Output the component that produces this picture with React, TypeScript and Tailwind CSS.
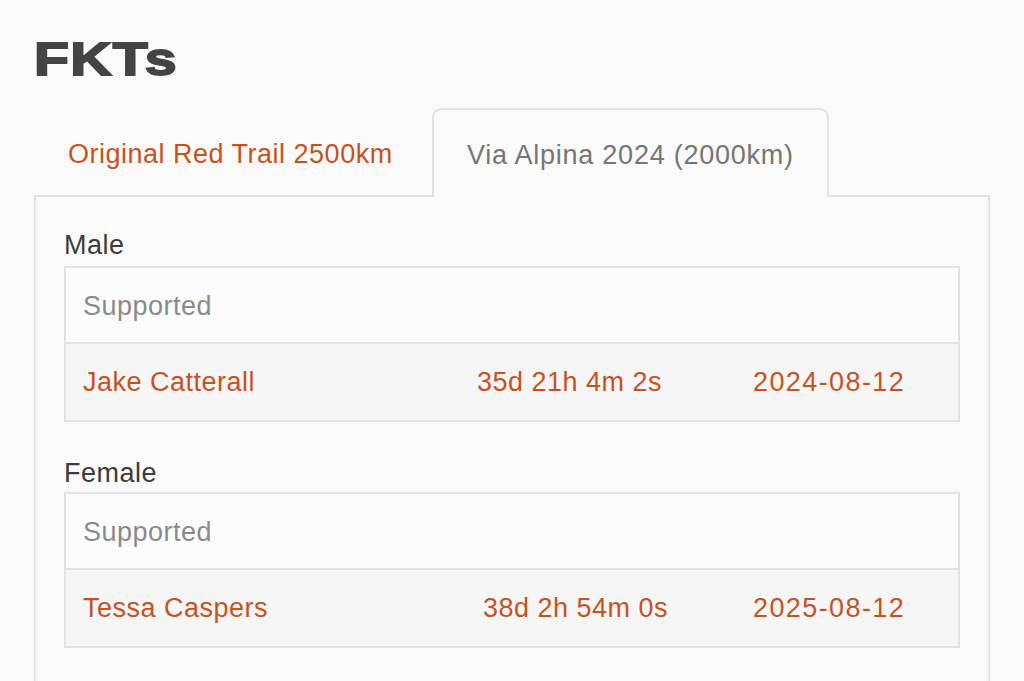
import React from "react";

const ORANGE = "text-[#c8521f]";

function RecordTable({
  name,
  time,
  date,
  cols,
}: {
  name: string;
  time: string;
  date: string;
  cols: string;
}) {
  return (
    <div className="border-2 border-[#e2e2e2]">
      <div className="h-[74px] flex items-center pl-[17px] pt-[2px] text-[#8a8a8a] bg-[#fcfcfc]">
        Supported
      </div>
      <div
        className={`h-[78px] border-t-2 border-[#e2e2e2] bg-[#f6f6f6] grid items-center pl-[17px] pt-[1px] ${cols} ${ORANGE}`}
      >
        <span>{name}</span>
        <span>{time}</span>
        <span className="tracking-[1.4px]">{date}</span>
      </div>
    </div>
  );
}

export default function App() {
  return (
    <div
      className="h-[681px] overflow-hidden bg-[#fafafa] pl-[34px] pr-[34px] text-[27px] tracking-[0.5px]"
      style={{ fontFamily: '"Liberation Sans", Arial, sans-serif' }}
    >
      <div className="pt-[35px] h-[108px]">
        <h1 className="inline-block origin-left scale-x-[1.22] text-[47px] leading-[47px] font-bold tracking-[1px] text-[#444444] [-webkit-text-stroke:1.8px_#444444]">
          FKTs
        </h1>
      </div>
      <div className="flex items-end">
        <div className={`h-[87px] w-[398px] flex items-center pl-[34px] pt-[5px] ${ORANGE}`}>
          Original Red Trail 2500km
        </div>
        <div className="relative z-10 -mb-[2px] h-[89px] flex items-center px-[33px] pt-[3px] tracking-[0.75px] border-2 border-b-0 border-[#e2e2e2] rounded-t-[9px] bg-[#fafafa] text-[#767676]">
          Via Alpina 2024 (2000km)
        </div>
      </div>
      <div className="border-2 border-[#e2e2e2] px-[28px] pt-[32px] pb-[200px]">
        <div className="h-[32px] leading-[32px] mb-[5px] text-[#3c3c3c]">Male</div>
        <RecordTable
          name="Jake Catterall"
          time="35d 21h 4m 2s"
          date="2024-08-12"
          cols="grid-cols-[394px_276px_1fr]"
        />
        <div className="h-[32px] leading-[32px] pt-[1px] mt-[34px] mb-[4px] text-[#3c3c3c]">Female</div>
        <RecordTable
          name="Tessa Caspers"
          time="38d 2h 54m 0s"
          date="2025-08-12"
          cols="grid-cols-[400px_270px_1fr]"
        />
      </div>
    </div>
  );
}
